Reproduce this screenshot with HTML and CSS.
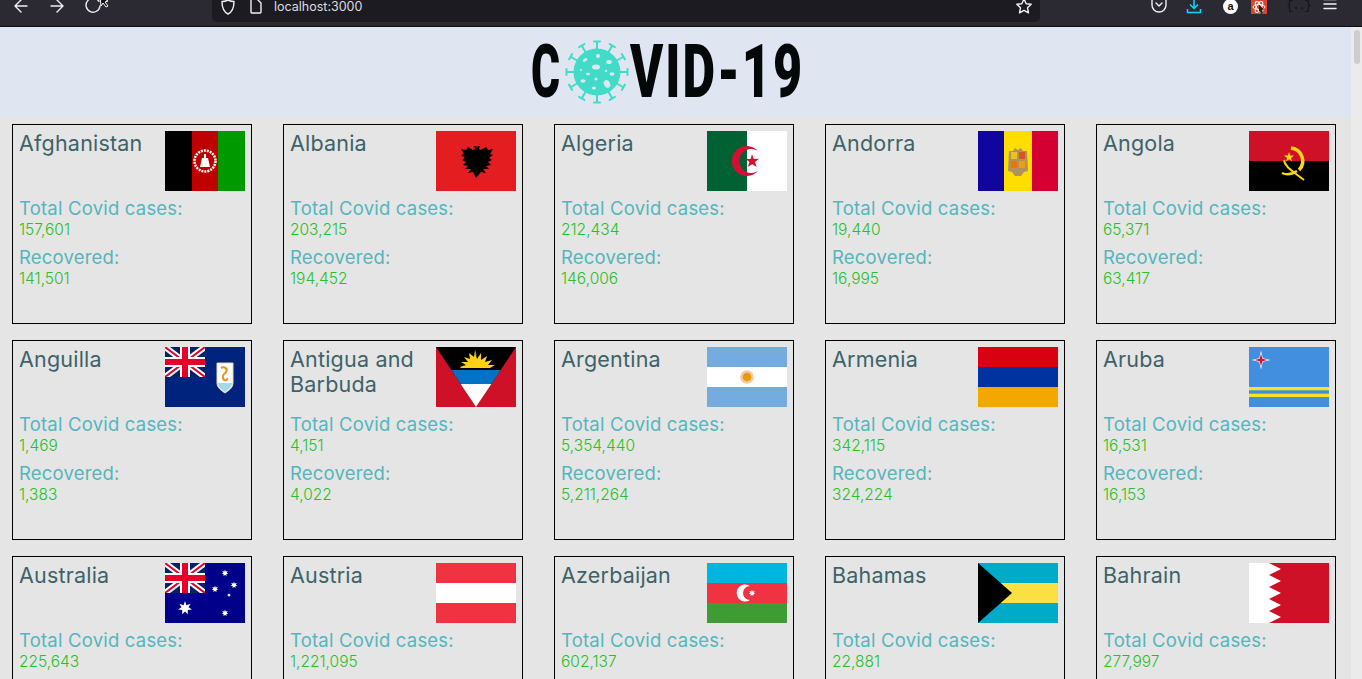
FILE: index.html
```html
<!DOCTYPE html>
<html lang="en">
<head>
<meta charset="utf-8">
<title>COVID-19</title>
<link rel="stylesheet" href="styles.css">
</head>
<body>
<svg class="defs" width="0" height="0" aria-hidden="true">
  <defs>
    <symbol id="jack" viewBox="0 0 40 30">
      <rect width="40" height="30" fill="#012169"/>
      <path d="M0 0L40 30M40 0L0 30" stroke="#fff" stroke-width="6"/>
      <path d="M0 0L40 30M40 0L0 30" stroke="#e4002b" stroke-width="2"/>
      <path d="M20 0V30M0 15H40" stroke="#fff" stroke-width="10"/>
      <path d="M20 0V30M0 15H40" stroke="#e4002b" stroke-width="6"/>
    </symbol>
    <symbol id="star7" viewBox="-10 -10 20 20">
      <path d="M0-10L2-4 8-6 5-1 10 2 4 3 4 9 0 5-4 9-4 3-10 2-5-1-8-6-2-4Z" fill="#fff"/>
    </symbol>
  </defs>
</svg>
<div class="browser">
  <nav class="toolbar">
    <div class="nav-icons">
      <svg class="tb-icon" viewBox="0 0 16 16"><path d="M14 8H2M8 2L2 8l6 6" class="ln"/></svg>
      <svg class="tb-icon" viewBox="0 0 16 16"><path d="M2 8h12M8 2l6 6-6 6" class="ln"/></svg>
      <svg class="tb-icon reload" viewBox="0 0 26 16">
        <path d="M14 3.5A7 7 0 1 0 15 8" class="ln"/>
        <path d="M15 -2l1 10 2-3 3 4 2-1-3-4 3-1Z" fill="#111" stroke="#fff" stroke-width="1"/>
      </svg>
    </div>
    <div class="urlbar">
      <svg class="shield" viewBox="0 0 16 16"><path d="M8 1c2 1 4 1.500 6 1.500 0 6-1 10-6 12.500C3 12.500 2 8.500 2 2.500 4 2.500 6 2 8 1Z" class="ln"/></svg>
      <svg class="page-ic" viewBox="0 0 14 16"><path d="M2 0h6l4 4v9a1 1 0 0 1-1 1H3a1 1 0 0 1-1-1Z" class="ln"/></svg>
      <span class="url">localhost:3000</span>
      <svg class="star" viewBox="0 0 16 16"><path d="M8 1l2.200 4.700 5 .6-3.700 3.500 1 5L8 12.300 3.500 14.800l1-5L.8 6.300l5-.6Z" class="ln"/></svg>
    </div>
    <div class="ext-icons">
      <svg class="ext pocket" viewBox="0 0 16 16"><path d="M2 0h12a1 1 0 0 1 1 1v6a7 7 0 0 1-14 0V1a1 1 0 0 1 1-1Z" class="ln"/><path d="M5 5l3 3 3-3" class="ln"/></svg>
      <svg class="ext download" viewBox="0 0 16 16"><path d="M8 0v9M4 5.500L8 9.500l4-4M1.500 10v3.500h13V10" class="ln-blue"/></svg>
      <span class="amazon">a</span>
      <svg class="ext react" viewBox="0 0 16 16"><rect width="16" height="14" fill="#d9452f"/><g fill="none" stroke="#fff"><ellipse cx="8" cy="7" rx="6" ry="2.500"/><ellipse cx="8" cy="7" rx="6" ry="2.500" transform="rotate(60 8 7)"/><ellipse cx="8" cy="7" rx="6" ry="2.500" transform="rotate(120 8 7)"/></g><path d="M8 5l5 4-2 1 1 3-2 1-1-3-1 1Z" fill="#222"/></svg>
      <span class="braces">{..}</span>
      <svg class="ext burger" viewBox="0 0 14 14"><path d="M1 1.500h12M1 6h12M1 10.500h12" class="ln"/></svg>
    </div>
  </nav>
  <div class="viewport">
    <div class="page">
      <header class="hero">
        <h1 class="logo">
          <span class="logo-c">C</span>
          <svg class="virus" viewBox="-33 -33 66 66">
            <g stroke="#40dcc8" stroke-width="2" stroke-linecap="round">
              <path id="sp" d="M0-22V-30M-3-30.500H3"/>
              <path d="M0-22V-30M-3-30.500H3" transform="rotate(30)"/>
              <path d="M0-22V-30M-3-30.500H3" transform="rotate(60)"/>
              <path d="M0-22V-30M-3-30.500H3" transform="rotate(90)"/>
              <path d="M0-22V-30M-3-30.500H3" transform="rotate(120)"/>
              <path d="M0-22V-30M-3-30.500H3" transform="rotate(150)"/>
              <path d="M0-22V-30M-3-30.500H3" transform="rotate(180)"/>
              <path d="M0-22V-30M-3-30.500H3" transform="rotate(210)"/>
              <path d="M0-22V-30M-3-30.500H3" transform="rotate(240)"/>
              <path d="M0-22V-30M-3-30.500H3" transform="rotate(270)"/>
              <path d="M0-22V-30M-3-30.500H3" transform="rotate(300)"/>
              <path d="M0-22V-30M-3-30.500H3" transform="rotate(330)"/>
            </g>
            <circle r="23.500" fill="#40dcc8"/>
            <g fill="#dfe6f1">
              <ellipse cx="-1" cy="-5" rx="4" ry="2.500"/>
              <ellipse cx="-12" cy="-12" rx="2.500" ry="1.500" transform="rotate(-30 -12 -12)"/>
              <circle cx="1" cy="-16" r="2"/>
              <ellipse cx="12" cy="-10" rx="2.800" ry="2"/>
              <circle cx="9" cy="-1" r="1.200"/>
              <ellipse cx="15" cy="2" rx="2.500" ry="1.800"/>
              <ellipse cx="-9" cy="2" rx="2" ry="1.300"/>
              <circle cx="-16" cy="-2" r="1"/>
              <circle cx="-1" cy="7" r="1.500"/>
              <ellipse cx="10" cy="12" rx="3" ry="4" transform="rotate(-30 10 12)"/>
              <ellipse cx="-14" cy="9" rx="2.500" ry="1.800"/>
              <ellipse cx="-3" cy="16" rx="2" ry="1.500"/>
            </g>
          </svg>
          <span class="logo-rest">VID-19</span>
        </h1>
      </header>
      <main class="grid">

        <article class="card">
          <div class="head"><h2 class="name">Afghanistan</h2>
            <svg class="flag" viewBox="0 0 80 60"><rect width="27" height="60"/><rect x="27" width="27" height="60" fill="#be0000"/><rect x="53" width="27" height="60" fill="#009900"/><circle cx="40" cy="30" r="10.500" fill="none" stroke="#fff" stroke-width="2.500" stroke-dasharray="2 1"/><path d="M35 36h10l-2-9h-2v-4h-2v4h-2Z" fill="#fff"/></svg></div>
          <div class="stat"><div class="label">Total Covid cases:</div><div class="value">157,601</div></div>
          <div class="stat"><div class="label">Recovered:</div><div class="value">141,501</div></div>
        </article>

        <article class="card">
          <div class="head"><h2 class="name">Albania</h2>
            <svg class="flag" viewBox="0 0 80 60"><rect width="80" height="60" fill="#e41e20"/><path d="M40 47l-3-6-5 1 3-4-6 0 3-3-5-1 3-3-4-2 3-2-4-3 3-1-3-5 5 1 2-3 5 3 2-1-1-3 2 0 1 2 1-2 2 0-1 3 2 1 5-3 2 3 5-1-3 5 3 1-4 3 3 2-4 2 3 3-5 1 3 3-6 0 3 4-5-1Z"/></svg></div>
          <div class="stat"><div class="label">Total Covid cases:</div><div class="value">203,215</div></div>
          <div class="stat"><div class="label">Recovered:</div><div class="value">194,452</div></div>
        </article>

        <article class="card">
          <div class="head"><h2 class="name">Algeria</h2>
            <svg class="flag" viewBox="0 0 80 60"><rect width="80" height="60" fill="#fff"/><rect width="40" height="60" fill="#006233"/><path d="M51 20A15 15 0 1 0 51 40 12 12 0 1 1 51 20Z" fill="#d21034"/><path d="M45 23l1.800 5 5.200-.3-4 3.300 1.600 5-4.400-2.800-4.400 2.800 1.600-5-4-3.300 5.200.3Z" fill="#d21034"/></svg></div>
          <div class="stat"><div class="label">Total Covid cases:</div><div class="value">212,434</div></div>
          <div class="stat"><div class="label">Recovered:</div><div class="value">146,006</div></div>
        </article>

        <article class="card">
          <div class="head"><h2 class="name">Andorra</h2>
            <svg class="flag" viewBox="0 0 80 60"><rect width="26" height="60" fill="#10069f"/><rect x="26" width="28" height="60" fill="#fedd00"/><rect x="54" width="26" height="60" fill="#d50032"/><path d="M31 20h4l2-3 3 2 3-2 2 3h4l1 20-4 1-3 4h-6l-3-4-4-1Z" fill="#b0925f"/><rect x="33" y="21" width="6" height="7" fill="#f0c020"/><rect x="41" y="21" width="6" height="7" fill="#d9541e"/><rect x="33" y="30" width="6" height="7" fill="#e8760f"/><rect x="41" y="30" width="6" height="7" fill="#e8a010"/></svg></div>
          <div class="stat"><div class="label">Total Covid cases:</div><div class="value">19,440</div></div>
          <div class="stat"><div class="label">Recovered:</div><div class="value">16,995</div></div>
        </article>

        <article class="card">
          <div class="head"><h2 class="name">Angola</h2>
            <svg class="flag" viewBox="0 0 80 60"><rect width="80" height="30" fill="#ce1126"/><rect y="30" width="80" height="30"/><path d="M42 17A13 13 0 0 1 50 39" fill="none" stroke="#f9d616" stroke-width="3.500"/><path d="M35 29c1 7 7 10 20 20" fill="none" stroke="#f9d616" stroke-width="2"/><path d="M33 42c6 3 12 0 15-2" fill="none" stroke="#f9d616" stroke-width="2.500"/><path d="M40 21l1.200 3.600 3.800 0-3 2.300 1 3.600-3-2.200-3 2.200 1-3.600-3-2.300 3.800 0Z" fill="#f9d616"/></svg></div>
          <div class="stat"><div class="label">Total Covid cases:</div><div class="value">65,371</div></div>
          <div class="stat"><div class="label">Recovered:</div><div class="value">63,417</div></div>
        </article>

        <article class="card">
          <div class="head"><h2 class="name">Anguilla</h2>
            <svg class="flag" viewBox="0 0 80 60"><rect width="80" height="60" fill="#00247d"/><use href="#jack" width="40" height="30"/><path d="M52 16h16v20c0 5-5 8-8 10-3-2-8-5-8-10Z" fill="#fff" stroke="#e8d9a0"/><path d="M53 36h14c0 4-4 7-7 9-3-2-7-5-7-9Z" fill="#a5d8ef"/><path d="M56 21c4-2 7 1 5 4s-4 2-3 6 5 2 4 0" fill="none" stroke="#e8901a" stroke-width="2"/></svg></div>
          <div class="stat"><div class="label">Total Covid cases:</div><div class="value">1,469</div></div>
          <div class="stat"><div class="label">Recovered:</div><div class="value">1,383</div></div>
        </article>

        <article class="card">
          <div class="head"><h2 class="name">Antigua and Barbuda</h2>
            <svg class="flag" viewBox="0 0 80 60"><rect width="80" height="60" fill="#ce1126"/><path d="M0 0H80L40 60Z"/><path d="M39 5l2 7 4-6 0 7 6-4-2 6 7-2-4 5 7 0-5 3H25l-1-1 6-2-5-3 7 0-4-5 6 2-1-6 5 4 1-7 2 6Z" fill="#fcd116"/><path d="M15.300 23H64.700L55.400 37H24.600Z" fill="#0072c6"/><path d="M24.600 37H55.400L40 60Z" fill="#fff"/></svg></div>
          <div class="stat"><div class="label">Total Covid cases:</div><div class="value">4,151</div></div>
          <div class="stat"><div class="label">Recovered:</div><div class="value">4,022</div></div>
        </article>

        <article class="card">
          <div class="head"><h2 class="name">Argentina</h2>
            <svg class="flag" viewBox="0 0 80 60"><rect width="80" height="60" fill="#74acdf"/><rect y="20" width="80" height="20" fill="#fff"/><circle cx="40" cy="30" r="6.800" fill="#f4c9a0"/><circle cx="40" cy="30" r="4.300" fill="#e59a10"/></svg></div>
          <div class="stat"><div class="label">Total Covid cases:</div><div class="value">5,354,440</div></div>
          <div class="stat"><div class="label">Recovered:</div><div class="value">5,211,264</div></div>
        </article>

        <article class="card">
          <div class="head"><h2 class="name">Armenia</h2>
            <svg class="flag" viewBox="0 0 80 60"><rect width="80" height="20" fill="#d90012"/><rect y="20" width="80" height="20" fill="#0033a0"/><rect y="40" width="80" height="20" fill="#f2a800"/></svg></div>
          <div class="stat"><div class="label">Total Covid cases:</div><div class="value">342,115</div></div>
          <div class="stat"><div class="label">Recovered:</div><div class="value">324,224</div></div>
        </article>

        <article class="card">
          <div class="head"><h2 class="name">Aruba</h2>
            <svg class="flag" viewBox="0 0 80 60"><rect width="80" height="60" fill="#418fde"/><rect y="40" width="80" height="3.300" fill="#fbe122"/><rect y="46.700" width="80" height="3.300" fill="#fbe122"/><path d="M12 3.500l1.800 7.700 7.700 1.800-7.700 1.800L12 22.500l-1.800-7.700L2.500 13l7.700-1.800Z" fill="#fff"/><path d="M12 6.500l1.300 5.200 5.200 1.300-5.200 1.300L12 19.500l-1.300-5.200L5.500 13l5.200-1.300Z" fill="#d2122e"/></svg></div>
          <div class="stat"><div class="label">Total Covid cases:</div><div class="value">16,531</div></div>
          <div class="stat"><div class="label">Recovered:</div><div class="value">16,153</div></div>
        </article>

        <article class="card">
          <div class="head"><h2 class="name">Australia</h2>
            <svg class="flag" viewBox="0 0 80 60"><rect width="80" height="60" fill="#00008b"/><use href="#jack" width="40" height="30"/><use href="#star7" x="13" y="38" width="14" height="14"/><use href="#star7" x="56.500" y="6.500" width="7" height="7"/><use href="#star7" x="65.500" y="18.500" width="7" height="7"/><use href="#star7" x="46.500" y="22.500" width="7" height="7"/><use href="#star7" x="62" y="30" width="4" height="4"/><use href="#star7" x="56.500" y="46.500" width="7" height="7"/></svg></div>
          <div class="stat"><div class="label">Total Covid cases:</div><div class="value">225,643</div></div>
        </article>

        <article class="card">
          <div class="head"><h2 class="name">Austria</h2>
            <svg class="flag" viewBox="0 0 80 60"><rect width="80" height="60" fill="#ef3340"/><rect y="20" width="80" height="20" fill="#fff"/></svg></div>
          <div class="stat"><div class="label">Total Covid cases:</div><div class="value">1,221,095</div></div>
        </article>

        <article class="card">
          <div class="head"><h2 class="name">Azerbaijan</h2>
            <svg class="flag" viewBox="0 0 80 60"><rect width="80" height="20" fill="#00b5e2"/><rect y="20" width="80" height="20" fill="#ef3340"/><rect y="40" width="80" height="20" fill="#3f9c35"/><path d="M43 23A8.500 8.500 0 1 0 43 37 7 7 0 1 1 43 23Z" fill="#fff"/><use href="#star7" x="41.500" y="26.500" width="7" height="7"/></svg></div>
          <div class="stat"><div class="label">Total Covid cases:</div><div class="value">602,137</div></div>
        </article>

        <article class="card">
          <div class="head"><h2 class="name">Bahamas</h2>
            <svg class="flag" viewBox="0 0 80 60"><rect width="80" height="60" fill="#00abc9"/><rect y="20" width="80" height="20" fill="#fae042"/><path d="M0 0L34 30 0 60Z"/></svg></div>
          <div class="stat"><div class="label">Total Covid cases:</div><div class="value">22,881</div></div>
        </article>

        <article class="card">
          <div class="head"><h2 class="name">Bahrain</h2>
            <svg class="flag" viewBox="0 0 80 60"><rect width="80" height="60" fill="#ce1126"/><path d="M0 0H20L32 6 20 12 32 18 20 24 32 30 20 36 32 42 20 48 32 54 20 60H0Z" fill="#fff"/></svg></div>
          <div class="stat"><div class="label">Total Covid cases:</div><div class="value">277,997</div></div>
        </article>

      </main>
    </div>
    <div class="scrollbar"><div class="thumb"></div></div>
  </div>
</div>
</body>
</html>
```

FILE: styles.css
```css
* { box-sizing: border-box; }
html, body { margin: 0; height: 100%; overflow: hidden; }
body { font-family: Inter, "Noto Sans", sans-serif; background: #e5e5e5; }
.defs { position: absolute; }

.browser { display: flex; flex-direction: column; height: 679px; }

.toolbar {
  flex: none;
  height: 27px;
  display: flex;
  background: #2b2a33;
  border-bottom: 1px solid #0c0c0d;
  overflow: hidden;
}
.ln { fill: none; stroke: #f0f0f4; stroke-width: 1.400; stroke-linecap: round; stroke-linejoin: round; }
.ln-blue { fill: none; stroke: #00ddff; stroke-width: 1.500; }

.nav-icons { width: 212px; flex: none; display: flex; align-items: flex-start; gap: 20px; padding: 0 0 0 13px; }
.tb-icon { width: 16px; height: 16px; margin-top: -2px; flex: none; overflow: visible; }
.reload { width: 26px; margin-left: 0; }

.urlbar {
  flex: none;
  width: 828px;
  height: 22px;
  background: #1c1b22;
  border-radius: 0 0 5px 5px;
  display: flex;
  align-items: flex-start;
  color: #dcdce0;
  font-size: 12.500px;
  line-height: 14px;
}
.shield { width: 16px; height: 16px; margin: -1px 0 0 8px; flex: none; }
.page-ic { width: 14px; height: 16px; margin: -1px 0 0 13px; flex: none; }
.url { margin-left: 11px; flex: 1; }
.star { width: 16px; height: 16px; margin: -2px 8px 0 0; flex: none; }

.ext-icons { flex: 1; position: relative; display: flex; align-items: flex-start; padding-left: 111px; }
.ext { flex: none; width: 16px; height: 16px; }
.pocket { margin-top: -2px; }
.download { margin: -1px 0 0 19px; }
.amazon {
  flex: none; width: 15px; height: 15px; margin: -1px 0 0 21px;
  border-radius: 50%; background: #fff; color: #111;
  font: 700 11px/14px "Liberation Sans", sans-serif; text-align: center;
}
.react { margin: 0 0 0 13px; }
.braces { flex: none; margin: -2px 0 0 19px; width: 16px; color: #111; font-size: 12px; line-height: 16px; font-family: "Liberation Mono", monospace; letter-spacing: -1px; }
.burger { width: 14px; height: 14px; margin: -2px 0 0 21px; }

.viewport { flex: 1; min-height: 0; display: flex; overflow: hidden; }
.page { flex: 1; min-width: 0; }
.scrollbar { flex: none; width: 11px; background: #ebebeb; padding: 3px 2px 0 3px; }
.thumb { height: 34px; border-radius: 3px; background: #cdcdcd; }

.hero { height: 89px; background: #dfe6f1; display: flex; align-items: center; justify-content: center; }
.logo { margin: 0; width: 289px; height: 64px; display: flex; align-items: center; color: #050808; font: 900 74px/64px Roboto, sans-serif; }
.logo-c { display: block; width: 33px; flex: none; transform: scaleX(.6); transform-origin: left center; }
.virus { width: 66px; height: 66px; flex: none; }
.logo-rest { display: block; flex: none; width: 190px; letter-spacing: 3px; white-space: nowrap; transform: scaleX(.68); transform-origin: left center; }

.grid {
  display: grid;
  grid-template-columns: repeat(5, 240px);
  column-gap: 31px;
  row-gap: 16px;
  padding: 8px 0 0 12px;
}
.card { height: 200px; border: 1px solid #000; padding: 6px; }
.head { display: flex; justify-content: space-between; height: 60px; }
.name { margin: 0; flex: 1; min-width: 0; color: #3d6268; font-size: 21.500px; font-weight: 400; line-height: 25px; letter-spacing: .2px; }
.flag { width: 80px; height: 60px; flex: none; display: block; }
.stat { margin-top: 6px; }
.label { color: #54b6bd; font-size: 18.500px; line-height: 23px; letter-spacing: .2px; }
.value { color: #28c028; font-size: 15.500px; font-weight: 300; line-height: 20px; }
```
